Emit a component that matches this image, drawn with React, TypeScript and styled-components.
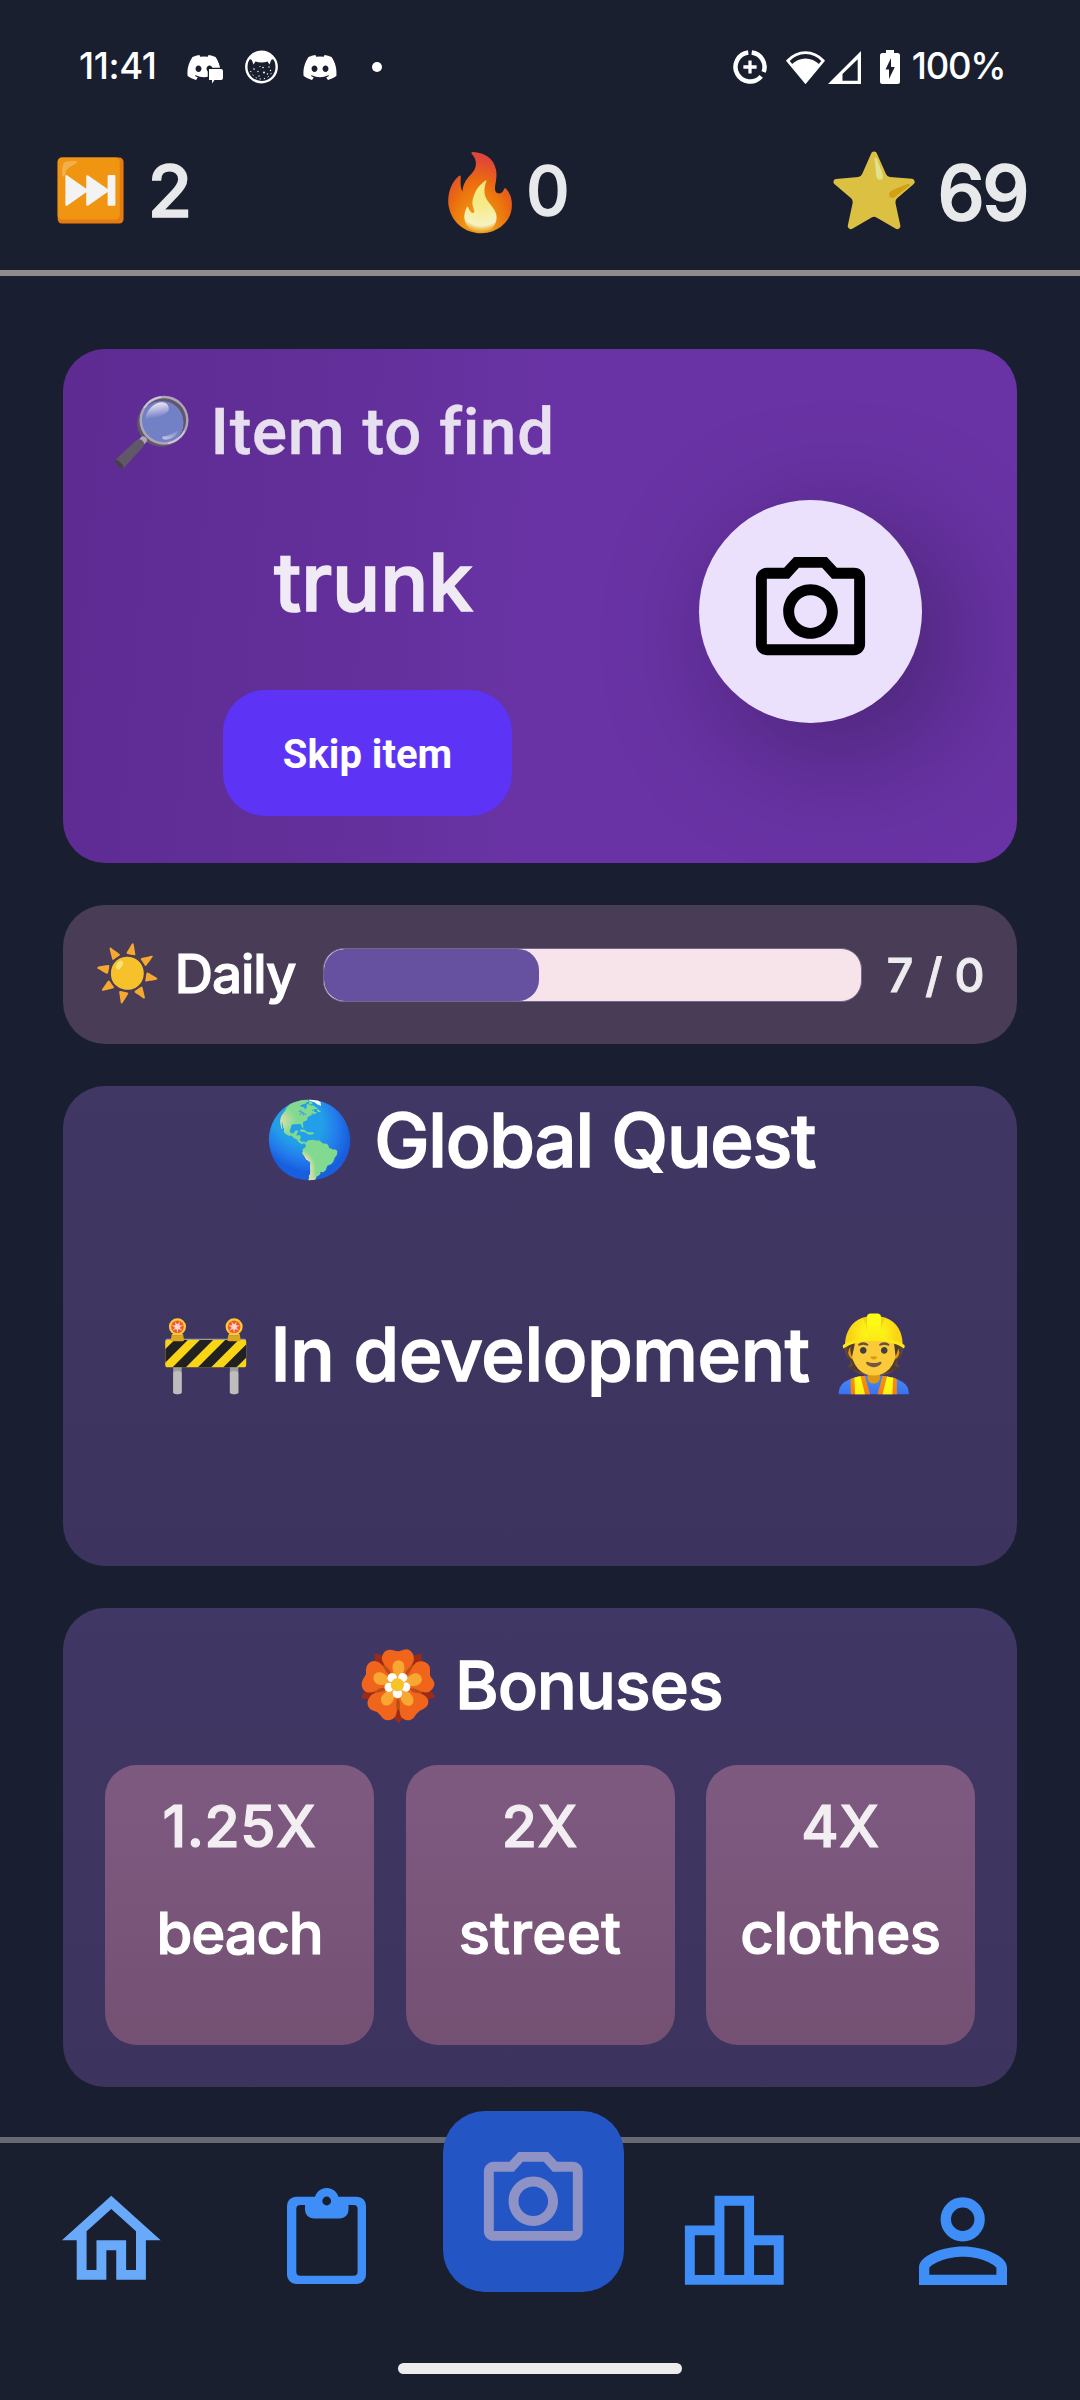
import React from 'react';
import styled, { createGlobalStyle } from 'styled-components';
import { FaDiscord } from 'react-icons/fa6';

const GlobalStyle = createGlobalStyle`
  * { box-sizing: border-box; }
  body { margin: 0; background: #1a1f30; }
`;

const Screen = styled.div`
  width: 1080px;
  height: 2400px;
  display: flex;
  flex-direction: column;
  overflow: hidden;
  background: #1a1f30;
  color: #fff;
  font-family: Inter, Roboto, sans-serif;
  font-weight: 500;
`;

const Header = styled.header`
  height: 276px;
  flex: none;
  border-bottom: 6px solid #8f8b8d;
`;

const StatusBar = styled.div`
  height: 134px;
  display: flex;
  align-items: center;
  justify-content: space-between;
  padding: 0 74px 0 79px;
`;

const StatusGroup = styled.div`
  display: flex;
  align-items: center;
`;

const StatusText = styled.span<{ $ls: number }>`
  font-size: 36.5px;
  line-height: 40px;
  letter-spacing: ${p => p.$ls}px;
  margin-top: -3px;
`;

const Glyph = styled.span<{ $w: number; $h: number; $ml?: number }>`
  display: flex;
  align-items: center;
  justify-content: center;
  flex: none;
  width: ${p => p.$w}px;
  height: ${p => p.$h}px;
  margin-left: ${p => p.$ml ?? 0}px;
  svg { display: block; flex: none; }
`;

const DiscordMark = styled(FaDiscord)`
  width: 36px;
  height: 29px;
`;

const ChatBadgeWrap = styled.span`
  position: relative;
  display: flex;
`;

const ChatBadge = styled.svg`
  position: absolute;
  left: 19px;
  top: 13px;
`;

const Dot = styled.span`
  width: 10px;
  height: 10px;
  border-radius: 50%;
  background: #fff;
  margin-left: 35px;
`;

const Stats = styled.div`
  height: 136px;
  display: flex;
  align-items: center;
  justify-content: space-between;
  padding: 0 53px 22px;
`;

const Stat = styled.div<{ $gap: number; $mr?: number }>`
  display: flex;
  align-items: center;
  margin-right: ${p => p.$mr ?? 0}px;

  & > :last-child { margin-left: ${p => p.$gap}px; }
`;

const Emoji = styled.span<{ $size: number; $dim?: number; $top?: number }>`
  flex: none;
  width: ${p => p.$size * 1.245}px;
  text-align: center;
  font-family: 'Noto Color Emoji', sans-serif;
  font-size: ${p => p.$size}px;
  font-weight: 400;
  line-height: 1.2;
  opacity: ${p => p.$dim ?? 1};
  filter: saturate(0.9);
  margin-top: ${p => p.$top ?? 0}px;
`;

const Label = styled.span<{ $size: number; $ls?: number; $alpha?: number; $top?: number }>`
  font-size: ${p => p.$size}px;
  line-height: 1.2;
  letter-spacing: ${p => p.$ls ?? 0}px;
  white-space: pre;
  opacity: ${p => p.$alpha ?? 1};
  margin-top: ${p => p.$top ?? 0}px;
  -webkit-text-stroke: 0.021em currentColor;
  stroke-linejoin: round;
`;

const PlainLabel = styled(Label)`
  font-family: Roboto, sans-serif;
  -webkit-text-stroke-width: 0.006em;
`;

const Main = styled.main`
  flex: 1;
  display: flex;
  flex-direction: column;
  gap: 42px;
  padding: 73px 63px 0;
  background: #191f30;
`;

const Card = styled.section`
  border-radius: 42px;
  overflow: hidden;
  flex: none;
`;

const FindCard = styled(Card)`
  height: 514px;
  display: flex;
  background: linear-gradient(95deg, #5d2b92 0%, #63309b 32%, #6933a5 50%, #6933a5 100%);
`;

const FindInfo = styled.div`
  width: 609px;
  display: flex;
  flex-direction: column;
  align-items: center;
`;

const FindTitle = styled.h2`
  align-self: flex-start;
  display: flex;
  align-items: center;
  gap: 17px;
  height: 72px;
  margin: 47px 0 0 47px;
  font-weight: 500;
`;

const FindWord = styled.div`
  height: 100px;
  display: flex;
  align-items: center;
  margin: 64px 0 58px;
  padding-left: 12px;
`;

const SkipButton = styled.button`
  width: 289px;
  height: 126px;
  border: 0;
  border-radius: 42px;
  background: #5d33f5;
  color: #fff;
  font: 700 40px/1.2 Roboto, sans-serif;
  padding: 3px 0 0;
`;

const FindAction = styled.div`
  flex: 1;
  display: flex;
  align-items: center;
  justify-content: center;
  padding: 11px 0 0 0;
  margin-right: 69px;
`;

const RoundButton = styled.button`
  width: 223px;
  height: 223px;
  flex: none;
  display: flex;
  align-items: center;
  justify-content: center;
  border: 0;
  padding: 0;
  border-radius: 50%;
  background: #ebe1fd;
  color: #000;
  box-shadow: 27px 27px 130px rgba(0, 0, 0, 0.33);
  svg { display: block; }
`;

const DailyCard = styled(Card)`
  height: 139px;
  display: flex;
  align-items: center;
  padding: 0 20px 0 31px;
  background: #483c57;
`;

const Track = styled.div`
  width: 539px;
  height: 54px;
  flex: none;
  margin-left: 27px;
  border: 1px solid #77658a;
  border-radius: 21px;
  background: #f7e4ea;
  overflow: hidden;
`;

const Fill = styled.div<{ $w: number }>`
  width: ${p => p.$w}px;
  height: 100%;
  border-radius: 21px;
  background: #6551a0;
`;

const QuestCard = styled(Card)`
  height: 480px;
  background: linear-gradient(#403764, #3c335e);
`;

const CenterRow = styled.div<{ $h: number; $gap: number; $mt: number }>`
  height: ${p => p.$h}px;
  display: flex;
  align-items: center;
  justify-content: center;
  gap: ${p => p.$gap}px;
  margin-top: ${p => p.$mt}px;
`;

const BonusCard = styled(QuestCard)`
  height: 479px;
`;

const Tiles = styled.div`
  display: grid;
  grid-template-columns: repeat(3, 1fr);
  gap: 31.5px;
  padding: 0 42px;
  margin-top: 39px;
`;

const Tile = styled.div`
  height: 280px;
  border-radius: 32px;
  background: linear-gradient(#7e5a81, #745173);
  display: flex;
  flex-direction: column;
  align-items: center;
  padding-top: 28px;
  gap: 38px;
`;

const Footer = styled.footer`
  height: 263px;
  flex: none;
  border-top: 6px solid #686972;
  background: #1a1f30;
`;

const Nav = styled.nav`
  height: 220px;
  display: grid;
  grid-template-columns: 222px 208px 206px 197px 1fr;
  justify-items: center;
  align-items: start;
`;

const NavItem = styled.button<{ $active?: boolean; $ml?: number; $mt?: number }>`
  height: 119px;
  margin: ${p => p.$mt ?? 38}px 0 0 ${p => p.$ml ?? 0}px;
  padding: 0;
  border: 0;
  background: none;
  display: flex;
  align-items: center;
  color: ${p => (p.$active ? '#68a9f9' : '#3f8ef7')};
  svg { display: block; }
`;

const ShutterButton = styled.button`
  width: 181px;
  height: 181px;
  margin-top: -32px;
  border: 0;
  border-radius: 42px;
  background: #2356c4;
  color: #8f92c5;
  display: flex;
  align-items: center;
  justify-content: center;
  padding: 0;
  svg { display: block; }
`;

const HomeBar = styled.div`
  width: 284px;
  height: 11px;
  border-radius: 6px;
  background: #ececec;
  margin: 0 auto;
`;

const MaterialIcon = ({ d, size }: { d: string; size: number }) => (
  <svg width={size} height={size} viewBox="0 0 24 24" fill="currentColor"><path d={d} /></svg>
);

const CAMERA = 'M20 4h-3.17L15 2H9L7.17 4H4c-1.1 0-2 .9-2 2v12c0 1.1.9 2 2 2h16c1.1 0 2-.9 2-2V6c0-1.1-.9-2-2-2zm0 14H4V6h4.05l1.83-2h4.24l1.83 2H20v12zM12 7c-2.76 0-5 2.24-5 5s2.24 5 5 5 5-2.24 5-5-2.24-5-5-5zm0 8c-1.65 0-3-1.35-3-3s1.35-3 3-3 3 1.35 3 3-1.35 3-3 3z';
const HOME = 'M12 5.69l5 4.5V18h-2v-6H9v6H7v-7.81l5-4.5M12 3L2 12h3v8h6v-6h2v6h6v-8h3L12 3z';
const RANKING = 'M16 11V3H8v6H2v12h20V11h-6zm-6-6h4v14h-4V5zm-6 6h4v8H4v-8zm16 8h-4v-6h4v6z';

const CatIcon = () => (
  <svg width="33" height="34" viewBox="0 0 33 34">
    <circle cx="16.500" cy="17" r="15.200" fill="none" stroke="#fff" strokeWidth="2.400" />
    <path d="M4 9C7 4.500 11.500 2 16.500 2s9.500 2.500 12.500 7c-1 0-2.500.5-3 1.500l-1.500 4-2-3c-3.500 1.200-8.500 1.200-12 0l-2 3-1.500-4c-.5-1-2-1.500-3-1.500z" fill="#fff" />
    <path d="M5.500 21c2 5 6 8 11 8s9-3 11-8" fill="none" stroke="#fff" strokeWidth="1" strokeDasharray="1.200 3" />
    <g fill="#fff">
      <circle cx="9" cy="19" r=".8" /><circle cx="13" cy="21.500" r=".7" /><circle cx="18" cy="17.500" r=".8" />
      <circle cx="19" cy="22.500" r="1" /><circle cx="24" cy="17" r=".7" /><circle cx="14" cy="26" r=".7" />
      <circle cx="22.500" cy="24" r=".7" /><circle cx="15" cy="16.500" r=".6" /><circle cx="25.500" cy="20.500" r=".7" />
    </g>
  </svg>
);

const DataSaverIcon = () => (
  <svg width="34" height="34" viewBox="0 0 33.400 33.400" fill="none" stroke="#fff" strokeWidth="4.400">
    <path d="M18.400 2.500A14.300 14.300 0 0 1 30.100 21.600M27.700 25.900A14.300 14.300 0 1 1 15 2.500" />
    <path d="M16.700 10.200v13M10.200 16.700h13" strokeWidth="3.200" />
  </svg>
);

const WifiIcon = () => (
  <svg width="39" height="33" viewBox="0 0 39 33">
    <path d="M1.800 9.800C12-1 27-1 37.200 9.800L19.500 31z" fill="none" stroke="#fff" strokeWidth="2.800" />
    <path d="M5.500 13.600C13.500 5.600 25.500 5.600 33.500 13.600L19.500 32.500z" fill="#fff" />
  </svg>
);

const SignalIcon = () => (
  <svg width="33" height="33" viewBox="0 0 33 33" fill="#fff">
    <path fillRule="evenodd" d="M0 33L33 0v33zM14.500 29.800H29.700V8.200L14.500 23z" />
  </svg>
);

const BatteryIcon = () => (
  <svg width="20" height="34" viewBox="0 0 20 34">
    <path fillRule="evenodd" fill="#fff" d="M6 0h8v3h3.500A2.500 2.500 0 0 1 20 5.500v26a2.500 2.500 0 0 1-2.500 2.500h-15A2.500 2.500 0 0 1 0 31.500v-26A2.500 2.500 0 0 1 2.500 3H6zM11 8L5.500 19.500H9V29l5.800-12H11z" />
  </svg>
);

const ClipboardIcon = () => (
  <svg width="79" height="96" viewBox="0 0 79 96" fill="currentColor">
    <path fillRule="evenodd" d="M9 8.700H70a9 9 0 0 1 9 9V87a9 9 0 0 1-9 9H9a9 9 0 0 1-9-9V17.700a9 9 0 0 1 9-9zM13.300 17a4 4 0 0 0-4 4V83.700a4 4 0 0 0 4 4H66.600a4 4 0 0 0 4-4V21a4 4 0 0 0-4-4z" />
    <path d="M18 12H61.500V22a8.500 8.500 0 0 1-8.500 8.500H26.500A8.500 8.500 0 0 1 18 22z" />
    <circle cx="39.700" cy="12.200" r="12.200" />
    <circle cx="39.700" cy="13" r="4.400" fill="#1a1f30" />
  </svg>
);

const PersonIcon = () => (
  <svg width="88" height="88" viewBox="0 0 88 88" fill="currentColor">
    <circle cx="43.700" cy="22.300" r="16.900" fill="none" stroke="currentColor" strokeWidth="10.400" />
    <path fillRule="evenodd" d="M0 88V70.500C0 59 23 49.500 44 49.500S88 59 88 70.500V88zM10.300 77.700H77.400V70.800C73.500 65.500 59 59.700 44 59.700S14.200 65.500 10.300 70.800z" />
  </svg>
);

const bonuses = [
  { factor: '1.25X', tag: 'beach', tracking: -1.2 },
  { factor: '2X', tag: 'street', tracking: 0.4 },
  { factor: '4X', tag: 'clothes', tracking: -0.4 },
];

export default function App() {
  return (
    <Screen>
      <GlobalStyle />
      <Header>
        <StatusBar>
          <StatusGroup>
            <StatusText $ls={-0.4}>11:41</StatusText>
            <Glyph $w={34} $h={34} $ml={30}>
              <ChatBadgeWrap>
                <DiscordMark />
                <ChatBadge width="19" height="18" viewBox="0 0 19 18">
                  <path d="M4 3H16a2 2 0 0 1 2 2V12a2 2 0 0 1-2 2H9.500L7 17.500V14H4V3z" fill="#fff" stroke="#1a1f30" strokeWidth="2.500" paintOrder="stroke" />
                </ChatBadge>
              </ChatBadgeWrap>
            </Glyph>
            <Glyph $w={33} $h={34} $ml={24}><CatIcon /></Glyph>
            <Glyph $w={34} $h={34} $ml={25}><DiscordMark /></Glyph>
            <Dot />
          </StatusGroup>
          <StatusGroup>
            <Glyph $w={34} $h={34}><DataSaverIcon /></Glyph>
            <Glyph $w={39} $h={33} $ml={19}><WifiIcon /></Glyph>
            <Glyph $w={33} $h={33} $ml={3}><SignalIcon /></Glyph>
            <Glyph $w={20} $h={34} $ml={19}><BatteryIcon /></Glyph>
            <Glyph $w={95} $h={40} $ml={11}><StatusText $ls={-1.3}>100%</StatusText></Glyph>
          </StatusGroup>
        </StatusBar>
        <Stats>
          <Stat $gap={20}>
            <Emoji $size={60} $dim={0.97}>⏭️</Emoji>
            <Label $size={72} $alpha={0.9}>2</Label>
          </Stat>
          <Stat $gap={0} $mr={17}>
            <Emoji $size={74} $dim={0.97} $top={4}>🔥</Emoji>
            <Label $size={67} $alpha={0.9}>0</Label>
          </Stat>
          <Stat $gap={17}>
            <Emoji $size={74} $dim={0.87} $top={2}>⭐</Emoji>
            <Label $size={75} $ls={-2.5} $alpha={0.9} $top={3}>69</Label>
          </Stat>
        </Stats>
      </Header>
      <Main>
        <FindCard>
          <FindInfo>
            <FindTitle>
              <Emoji $size={67} $dim={0.85}>🔎</Emoji>
              <PlainLabel $size={65.4} $ls={0.7} $alpha={0.85}>Item to find</PlainLabel>
            </FindTitle>
            <FindWord><Label $size={80} $ls={0} $alpha={0.9}>trunk</Label></FindWord>
            <SkipButton>Skip item</SkipButton>
          </FindInfo>
          <FindAction>
            <RoundButton><MaterialIcon d={CAMERA} size={131} /></RoundButton>
          </FindAction>
        </FindCard>
        <DailyCard>
          <Emoji $size={53.5}>☀️</Emoji>
          <Glyph $w={121} $h={66} $ml={14}><Label $size={53} $ls={-1}>Daily</Label></Glyph>
          <Track><Fill $w={215} /></Track>
          <Glyph $w={100} $h={66} $ml={24}><Label $size={46.5} $ls={-0.2} $alpha={0.9} $top={2}>7 / 0</Label></Glyph>
        </DailyCard>
        <QuestCard>
          <CenterRow $h={86} $gap={18} $mt={11}>
            <Emoji $size={73.5}>🌎</Emoji>
            <Label $size={74} $ls={-1.2}>Global Quest</Label>
          </CenterRow>
          <CenterRow $h={86} $gap={19} $mt={128}>
            <Emoji $size={73.5}>🚧</Emoji>
            <Label $size={74} $ls={-0.4}>In development</Label>
            <Emoji $size={73.5}>👷</Emoji>
          </CenterRow>
        </QuestCard>
        <BonusCard>
          <CenterRow $h={80} $gap={16} $mt={38}>
            <Emoji $size={66}>🏵️</Emoji>
            <Label $size={66} $ls={-0.7}>Bonuses</Label>
          </CenterRow>
          <Tiles>
            {bonuses.map(b => (
              <Tile key={b.tag}>
                <Label $size={57} $ls={0.6} $alpha={0.9}>{b.factor}</Label>
                <Label $size={58} $ls={b.tracking}>{b.tag}</Label>
              </Tile>
            ))}
          </Tiles>
        </BonusCard>
      </Main>
      <Footer>
        <Nav>
          <NavItem $active><MaterialIcon d={HOME} size={118.6} /></NavItem>
          <NavItem $mt={33}><ClipboardIcon /></NavItem>
          <ShutterButton><MaterialIcon d={CAMERA} size={118.6} /></ShutterButton>
          <NavItem><MaterialIcon d={RANKING} size={118.6} /></NavItem>
          <NavItem $ml={13}><PersonIcon /></NavItem>
        </Nav>
        <HomeBar />
      </Footer>
    </Screen>
  );
}
